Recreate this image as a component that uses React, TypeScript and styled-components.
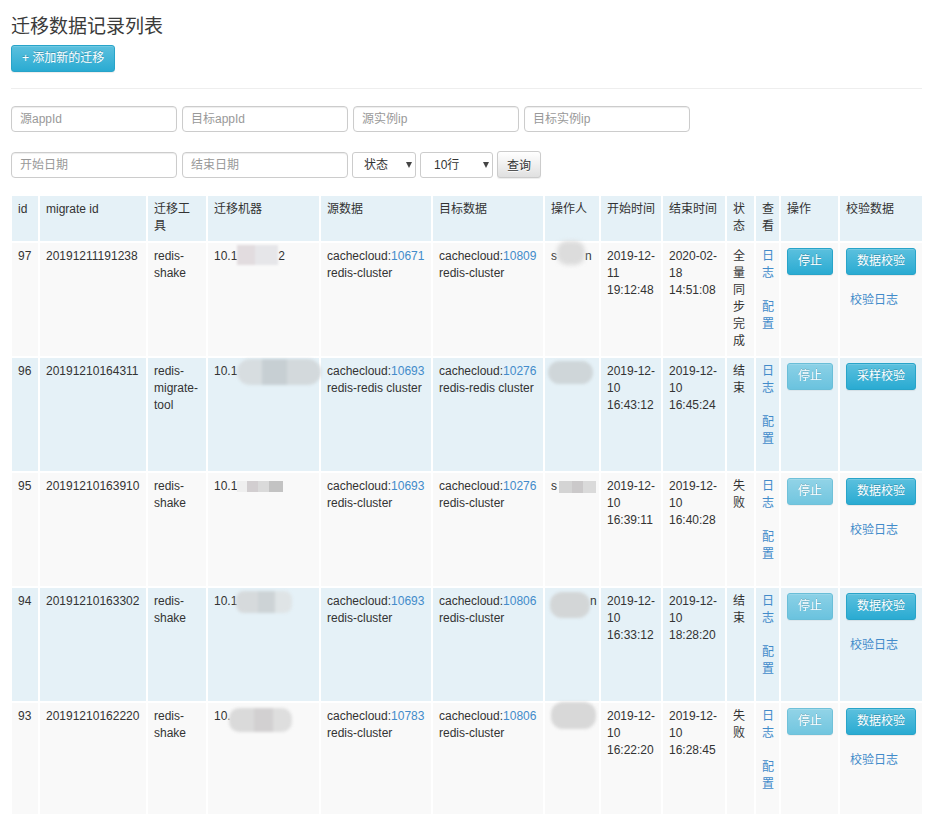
import React from "react";
import styled, { createGlobalStyle } from "styled-components";

const GlobalStyle = createGlobalStyle`
  * { box-sizing: border-box; }
  html, body { margin: 0; padding: 0; overflow: hidden; background: #fff; }
  body {
    font-family: "Liberation Sans", Arial, "Noto Sans CJK SC", sans-serif;
    font-size: 12px;
    color: #333;
  }
`;

const Page = styled.div`
  padding: 16px 4px 0 11px;
`;

const Title = styled.h1`
  margin: 0;
  font-size: 19px;
  line-height: 22px;
  font-weight: normal;
  color: #3a3a3a;
  font-family: "Liberation Sans", "Noto Sans CJK SC", sans-serif;
`;

const Toolbar = styled.div`
  display: flex;
  padding-top: 7px;
`;

const InfoButton = styled.button<{ $disabled?: boolean }>`
  display: inline-block;
  margin: 0;
  padding: 4px 10px;
  font: inherit;
  font-size: 12px;
  line-height: 17px;
  color: #fff;
  text-shadow: 0 -1px 0 rgba(0, 0, 0, 0.2);
  background-image: linear-gradient(to bottom, #5bc0de 0%, #2aabd2 100%);
  border: 1px solid #28a4c9;
  border-radius: 3px;
  box-shadow: inset 0 1px 0 rgba(255, 255, 255, 0.15), 0 1px 1px rgba(0, 0, 0, 0.075);
  white-space: nowrap;
  cursor: pointer;
  opacity: ${(p) => (p.$disabled ? 0.65 : 1)};
`;

const Divider = styled.div`
  height: 1px;
  background: #eee;
  margin: 16px 0 17px;
`;

const Filters = styled.div`
  display: flex;
  flex-direction: column;
  gap: 19px;
`;

const FilterRow = styled.div`
  display: flex;
  align-items: center;
  gap: 5px;
`;

const TextField = styled.input`
  width: 166px;
  height: 26px;
  padding: 0 8px;
  border: 1px solid #ccc;
  border-radius: 4px;
  font: inherit;
  font-size: 12px;
  color: #555;
  box-shadow: inset 0 1px 1px rgba(0, 0, 0, 0.075);
  outline: none;

  &::placeholder {
    color: #999;
  }
`;

const SelectWrap = styled.div<{ $w: number }>`
  position: relative;
  width: ${(p) => p.$w}px;
  height: 26px;
  margin-left: -1px;
`;

const Select = styled.select<{ $pad: number }>`
  appearance: none;
  width: 100%;
  height: 100%;
  padding: 0 0 0 ${(p) => p.$pad}px;
  border: 1px solid #ccc;
  border-radius: 3px;
  background: #fff;
  font: inherit;
  font-size: 12px;
  color: #333;
  outline: none;
`;

const Caret = styled.span`
  position: absolute;
  right: 4px;
  top: 10px;
  width: 0;
  height: 0;
  border-left: 3px solid transparent;
  border-right: 3px solid transparent;
  border-top: 6px solid #444;
  pointer-events: none;
`;

const QueryButton = styled.button`
  height: 27px;
  padding: 0 9px;
  margin-left: -1px;
  font: inherit;
  font-size: 12px;
  color: #333;
  text-shadow: 0 1px 0 #fff;
  background-image: linear-gradient(to bottom, #fff 0%, #e0e0e0 100%);
  border: 1px solid #ccc;
  border-radius: 3px;
  box-shadow: inset 0 1px 0 rgba(255, 255, 255, 0.15), 0 1px 1px rgba(0, 0, 0, 0.075);
`;

const Grid = styled.table`
  table-layout: fixed;
  width: 912px;
  margin: 16px 0 0 -1px;
  border-collapse: collapse;
`;

const HeadRow = styled.tr`
  background: #e5f1f7;
`;

const HeadCell = styled.th`
  padding: 5px 6px 6px;
  border: 2px solid #fff;
  font-weight: normal;
  text-align: left;
  vertical-align: top;
  line-height: 17px;
  white-space: nowrap;
`;

const BodyRow = styled.tr<{ $striped: boolean }>`
  height: 115px;
  background: ${(p) => (p.$striped ? "#f9f9f9" : "#e5f1f7")};
`;

const Cell = styled.td`
  padding: 5px 6px;
  border: 2px solid #fff;
  vertical-align: top;
  line-height: 17px;
  white-space: nowrap;
`;

const Line = styled.div`
  line-height: 17px;
`;

const Link = styled.a`
  color: #428bca;
  text-decoration: none;
  cursor: pointer;
`;

const LinkLine = styled.div`
  color: #428bca;
  line-height: 17px;
  cursor: pointer;
`;

const CheckLog = styled.div`
  margin: 17px 0 0 4px;
  color: #428bca;
  cursor: pointer;
`;

// blurred patch used where the screenshot hides hosts and names
const Smudge = styled.span<{
  $w: number;
  $h: number;
  $dy: number;
  $bg: string;
  $blur: number;
  $radius?: number;
  $ml?: number;
}>`
  display: inline-block;
  position: relative;
  top: ${(p) => p.$dy}px;
  width: ${(p) => p.$w}px;
  height: ${(p) => p.$h}px;
  margin: -20px 0 -20px ${(p) => p.$ml ?? 0}px;
  vertical-align: middle;
  background: ${(p) => p.$bg};
  border-radius: ${(p) => p.$radius ?? 0}px;
  filter: blur(${(p) => p.$blur}px);
`;

type Cloud = { app: string; kind: string };

interface Migration {
  id: number;
  mid: string;
  tool: string[];
  host: React.ReactNode;
  src: Cloud;
  dst: Cloud;
  operator: React.ReactNode;
  start: string[];
  end: string[];
  status: string;
  running: boolean;
  check: string;
  checkLog: boolean;
}

// column widths taken from the screenshot (outer columns carry the half border)
const columns = [28, 108, 60, 113, 112, 112, 56, 62, 64, 29, 25, 59, 84];

const headers: string[][] = [
  ["id"],
  ["migrate id"],
  ["迁移工", "具"],
  ["迁移机器"],
  ["源数据"],
  ["目标数据"],
  ["操作人"],
  ["开始时间"],
  ["结束时间"],
  ["状", "态"],
  ["查", "看"],
  ["操作"],
  ["校验数据"],
];

const rows: Migration[] = [
  {
    id: 97,
    mid: "20191211191238",
    tool: ["redis-", "shake"],
    host: (
      <>
        10.1
        <Smudge $w={41} $h={20} $dy={-2} $bg="linear-gradient(90deg, #e2dcdf 0 45%, #e6e6e9 45% 100%)" $blur={1} />
        2
      </>
    ),
    src: { app: "10671", kind: "redis-cluster" },
    dst: { app: "10809", kind: "redis-cluster" },
    operator: (
      <>
        s
        <Smudge $w={28} $h={24} $dy={-4} $radius={10} $bg="#dcdcdc" $blur={2} />
        n
      </>
    ),
    start: ["2019-12-", "11", "19:12:48"],
    end: ["2020-02-", "18", "14:51:08"],
    status: "全量同步完成",
    running: true,
    check: "数据校验",
    checkLog: true,
  },
  {
    id: 96,
    mid: "20191210164311",
    tool: ["redis-", "migrate-", "tool"],
    host: (
      <>
        10.1
        <Smudge $w={84} $h={26} $dy={0} $radius={13} $bg="linear-gradient(90deg, #d7dde0 0 30%, #c7cfd3 30% 60%, #d3d9dc 60% 100%)" $blur={1.5} />
      </>
    ),
    src: { app: "10693", kind: "redis-redis cluster" },
    dst: { app: "10276", kind: "redis-redis cluster" },
    operator: <Smudge $w={45} $h={23} $dy={1} $radius={12} $bg="#cfd6d9" $blur={1.5} $ml={-3} />,
    start: ["2019-12-", "10", "16:43:12"],
    end: ["2019-12-", "10", "16:45:24"],
    status: "结束",
    running: false,
    check: "采样校验",
    checkLog: false,
  },
  {
    id: 95,
    mid: "20191210163910",
    tool: ["redis-", "shake"],
    host: (
      <>
        10.1
        <Smudge $w={46} $h={11} $dy={0} $bg="linear-gradient(90deg, #efefef 0 22%, #d2ced0 22% 45%, #dadada 45% 70%, #c3c3c3 70% 100%)" $blur={0} />
      </>
    ),
    src: { app: "10693", kind: "redis-cluster" },
    dst: { app: "10276", kind: "redis-cluster" },
    operator: (
      <>
        s
        <Smudge $w={37} $h={12} $dy={0} $ml={2} $bg="linear-gradient(90deg, #d4d4d4 0 35%, #cbc9ca 35% 65%, #dadada 65% 100%)" $blur={0} />
      </>
    ),
    start: ["2019-12-", "10", "16:39:11"],
    end: ["2019-12-", "10", "16:40:28"],
    status: "失败",
    running: false,
    check: "数据校验",
    checkLog: true,
  },
  {
    id: 94,
    mid: "20191210163302",
    tool: ["redis-", "shake"],
    host: (
      <>
        10.1
        <Smudge $w={56} $h={22} $dy={0} $radius={8} $bg="linear-gradient(90deg, #d6dadc 0 40%, #cdd3d6 40% 70%, #dfe4e6 70% 100%)" $blur={1.5} $ml={-1} />
      </>
    ),
    src: { app: "10693", kind: "redis-cluster" },
    dst: { app: "10806", kind: "redis-cluster" },
    operator: (
      <>
        <Smudge $w={40} $h={26} $dy={3} $radius={12} $bg="#d3d6d7" $blur={1.5} $ml={-1} />
        n
      </>
    ),
    start: ["2019-12-", "10", "16:33:12"],
    end: ["2019-12-", "10", "18:28:20"],
    status: "结束",
    running: false,
    check: "数据校验",
    checkLog: true,
  },
  {
    id: 93,
    mid: "20191210162220",
    tool: ["redis-", "shake"],
    host: (
      <>
        10.
        <Smudge $w={63} $h={24} $dy={3} $radius={10} $bg="linear-gradient(90deg, #dadada 0 40%, #d2d0d1 40% 70%, #dedede 70% 100%)" $blur={1.5} $ml={-2} />
      </>
    ),
    src: { app: "10783", kind: "redis-cluster" },
    dst: { app: "10806", kind: "redis-cluster" },
    operator: <Smudge $w={45} $h={27} $dy={-1} $radius={12} $bg="#d8d8d8" $blur={1.5} />,
    start: ["2019-12-", "10", "16:22:20"],
    end: ["2019-12-", "10", "16:28:45"],
    status: "失败",
    running: false,
    check: "数据校验",
    checkLog: true,
  },
];

function RenderLines(props: { lines: string[] }) {
  return (
    <>
      {props.lines.map((l, i) => (
        <Line key={i}>{l}</Line>
      ))}
    </>
  );
}

function MigrationRow(props: { row: Migration; index: number }) {
  const { row, index } = props;
  return (
    <BodyRow $striped={index % 2 === 0}>
      <Cell>{row.id}</Cell>
      <Cell>{row.mid}</Cell>
      <Cell>
        <RenderLines lines={row.tool} />
      </Cell>
      <Cell>{row.host}</Cell>
      <Cell>
        <Line>
          cachecloud:<Link>{row.src.app}</Link>
        </Line>
        <Line>{row.src.kind}</Line>
      </Cell>
      <Cell>
        <Line>
          cachecloud:<Link>{row.dst.app}</Link>
        </Line>
        <Line>{row.dst.kind}</Line>
      </Cell>
      <Cell>{row.operator}</Cell>
      <Cell>
        <RenderLines lines={row.start} />
      </Cell>
      <Cell>
        <RenderLines lines={row.end} />
      </Cell>
      <Cell>
        <RenderLines lines={row.status.split("")} />
      </Cell>
      <Cell>
        <LinkLine>日</LinkLine>
        <LinkLine>志</LinkLine>
        <Line>&nbsp;</Line>
        <LinkLine>配</LinkLine>
        <LinkLine>置</LinkLine>
      </Cell>
      <Cell>
        <InfoButton $disabled={!row.running}>停止</InfoButton>
      </Cell>
      <Cell>
        <InfoButton>{row.check}</InfoButton>
        {row.checkLog && <CheckLog>校验日志</CheckLog>}
      </Cell>
    </BodyRow>
  );
}

export default function App() {
  return (
    <>
      <GlobalStyle />
      <Page>
        <Title>迁移数据记录列表</Title>
        <Toolbar>
          <InfoButton>+ 添加新的迁移</InfoButton>
        </Toolbar>
        <Divider />
        <Filters>
          <FilterRow>
            <TextField placeholder="源appId" />
            <TextField placeholder="目标appId" />
            <TextField placeholder="源实例ip" />
            <TextField placeholder="目标实例ip" />
          </FilterRow>
          <FilterRow>
            <TextField placeholder="开始日期" />
            <TextField placeholder="结束日期" />
            <SelectWrap $w={64}>
              <Select $pad={11} defaultValue="">
                <option value="">状态</option>
              </Select>
              <Caret />
            </SelectWrap>
            <SelectWrap $w={73}>
              <Select $pad={13} defaultValue="10">
                <option value="10">10行</option>
              </Select>
              <Caret />
            </SelectWrap>
            <QueryButton>查询</QueryButton>
          </FilterRow>
        </Filters>
        <Grid>
          <colgroup>
            {columns.map((w, i) => (
              <col key={i} style={{ width: w }} />
            ))}
          </colgroup>
          <thead>
            <HeadRow>
              {headers.map((h, i) => (
                <HeadCell key={i}>
                  <RenderLines lines={h} />
                </HeadCell>
              ))}
            </HeadRow>
          </thead>
          <tbody>
            {rows.map((r, i) => (
              <MigrationRow key={r.id} row={r} index={i} />
            ))}
          </tbody>
        </Grid>
      </Page>
    </>
  );
}
